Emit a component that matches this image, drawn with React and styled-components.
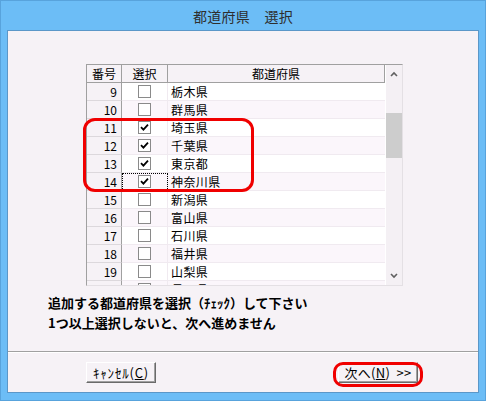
import React from 'react';
import styled, { createGlobalStyle } from 'styled-components';

const GlobalStyle = createGlobalStyle`
  html, body {
    margin: 0;
    padding: 0;
    background: #6cbdf6;
  }
  body {
    font-family: "Noto Sans CJK JP", "Noto Sans", sans-serif;
  }
`;

const Window = styled.div`
  box-sizing: border-box;
  width: 486px;
  height: 401px;
  border: 1px solid #58a3dc;
  background: #6cbdf6;
  display: flex;
  flex-direction: column;
  padding: 0 6px 7px 6px;
`;

const TitleBar = styled.div`
  height: 29px;
  display: flex;
  align-items: center;
  justify-content: center;
  font-size: 14px;
  letter-spacing: 0.3px;
  color: #2e2e2e;
`;

const Client = styled.div`
  flex: 1;
  border: 1px solid #5b97c8;
  background: #f6f2f6;
  display: flex;
  flex-direction: column;
`;

const ListWrap = styled.div`
  position: relative;
  margin: 33px 0 0 78px;
  width: 317px;
  height: 222px;
`;

const ListBox = styled.div`
  box-sizing: border-box;
  width: 100%;
  height: 100%;
  border-top: 1px solid #a0a0a0;
  border-left: 1px solid #a0a0a0;
  border-right: 1px solid #e4e0e4;
  border-bottom: 1px solid #e4e0e4;
  background: #ffffff;
  display: flex;
  overflow: hidden;
`;

const Table = styled.div`
  flex: 1;
  display: flex;
  flex-direction: column;
  overflow: hidden;
`;

const Row = styled.div`
  display: grid;
  grid-template-columns: 35px 46px 1fr;
  height: 18px;
  flex: none;
  background: ${(p) => (p.$alt ? '#fbf6fb' : '#ffffff')};
`;

const HeadCell = styled.div`
  box-sizing: border-box;
  display: flex;
  align-items: center;
  justify-content: center;
  background: #f6f2f6;
  border-right: 1px solid #a0a0a0;
  border-bottom: 1px solid #a0a0a0;
  font-size: 12px;
  color: #000;
`;

const NumCell = styled.div`
  box-sizing: border-box;
  display: flex;
  align-items: center;
  justify-content: flex-end;
  padding-right: 4px;
  background: #f6f2f6;
  border-right: 1px solid #a0a0a0;
  border-bottom: 1px solid #dcd8dc;
  font-size: 12px;
  color: #000;
`;

const SelCell = styled.div`
  box-sizing: border-box;
  display: flex;
  align-items: center;
  justify-content: center;
  border-right: 1px solid #f0eaf0;
  border-bottom: 1px solid #f0eaf0;
  outline: ${(p) => (p.$focus ? '1px dotted #000' : 'none')};
  outline-offset: -1px;
`;

const NameCell = styled.div`
  box-sizing: border-box;
  display: flex;
  align-items: center;
  padding-left: 3px;
  border-bottom: 1px solid #f0eaf0;
  font-size: 12px;
  letter-spacing: 0.4px;
  color: #000;
`;

const Box = styled.span`
  box-sizing: border-box;
  width: 13px;
  height: 13px;
  border: 1px solid #8a8a8a;
  background: #fff;
  display: flex;
  align-items: center;
  justify-content: center;
`;

const ScrollBar = styled.div`
  width: 16px;
  flex: none;
  border-left: 1px solid #ffffff;
  background: #f4f0f4;
  display: flex;
  flex-direction: column;
  align-items: center;
`;

const ScrollBtn = styled.div`
  height: 18px;
  width: 100%;
  display: flex;
  align-items: center;
  justify-content: center;
  flex: none;
`;

const Track = styled.div`
  flex: 1;
  width: 100%;
  padding-top: 30px;
`;

const Thumb = styled.div`
  width: 100%;
  height: 45px;
  background: #cdcdcd;
`;

const RedMark = styled.div`
  position: absolute;
  box-sizing: border-box;
  border: 3px solid #f00000;
  border-radius: ${(p) => p.$r}px;
  pointer-events: none;
`;

const Message = styled.div`
  margin: 7px 0 0 40px;
  font-size: 13px;
  font-weight: bold;
  line-height: 20px;
  color: #000;
`;

const Spacer = styled.div`
  flex: 1;
`;

const Separator = styled.div`
  border-top: 1px solid #a0a0a0;
  border-bottom: 1px solid #ffffff;
`;

const Footer = styled.div`
  height: 39px;
  box-sizing: border-box;
  padding: 9px 60px 0 78px;
  display: flex;
  align-items: flex-start;
  justify-content: space-between;
`;

const Button = styled.button`
  box-sizing: border-box;
  width: ${(p) => p.$w}px;
  height: 21px;
  padding: 0;
  background: #f6f2f6;
  border-top: 1px solid #ffffff;
  border-left: 1px solid #ffffff;
  border-right: 1px solid #6a6a6a;
  border-bottom: 1px solid #6a6a6a;
  box-shadow: inset -1px -1px 0 #a0a0a0;
  font-family: "Noto Sans CJK JP", "Noto Sans", sans-serif;
  font-size: 13px;
  letter-spacing: ${(p) => p.$ls || 0}px;
  color: #000;
  display: flex;
  align-items: center;
  justify-content: center;
  white-space: pre;
`;

const BtnWrap = styled.span`
  position: relative;
  display: inline-flex;
`;

const U = styled.span`
  text-decoration: underline;
`;

const prefs = [
  [9, '栃木県', false],
  [10, '群馬県', false],
  [11, '埼玉県', true],
  [12, '千葉県', true],
  [13, '東京都', true],
  [14, '神奈川県', true],
  [15, '新潟県', false],
  [16, '富山県', false],
  [17, '石川県', false],
  [18, '福井県', false],
  [19, '山梨県', false],
  [20, '長野県', false],
];

const Check = () => (
  <svg width="9" height="9" viewBox="0 0 9 9">
    <path d="M1 4.2 L3.4 6.6 L8 1.6" fill="none" stroke="#000" strokeWidth="1.8" />
  </svg>
);

const Chevron = ({ up }) => (
  <svg width="8" height="6" viewBox="0 0 8 6">
    <path
      d={up ? 'M1 5 L4 2 L7 5' : 'M1 1 L4 4 L7 1'}
      fill="none"
      stroke="#606060"
      strokeWidth="1.6"
    />
  </svg>
);

export default function App() {
  return (
    <>
      <GlobalStyle />
      <Window>
        <TitleBar>都道府県　選択</TitleBar>
        <Client>
          <ListWrap>
            <ListBox>
              <Table>
                <Row>
                  <HeadCell>番号</HeadCell>
                  <HeadCell>選択</HeadCell>
                  <HeadCell>都道府県</HeadCell>
                </Row>
                {prefs.map(([no, name, on], i) => (
                  <Row key={no} $alt={i % 2 === 1}>
                    <NumCell>{no}</NumCell>
                    <SelCell $focus={no === 14}>
                      <Box>{on && <Check />}</Box>
                    </SelCell>
                    <NameCell>{name}</NameCell>
                  </Row>
                ))}
              </Table>
              <ScrollBar>
                <ScrollBtn>
                  <Chevron up />
                </ScrollBtn>
                <Track>
                  <Thumb />
                </Track>
                <ScrollBtn>
                  <Chevron />
                </ScrollBtn>
              </ScrollBar>
            </ListBox>
            <RedMark $r={12} style={{ left: -3, top: 54, width: 171, height: 74 }} />
          </ListWrap>
          <Message>
            追加する都道府県を選択（ﾁｪｯｸ）して下さい
            <br />
            1つ以上選択しないと、次へ進めません
          </Message>
          <Spacer />
          <Separator />
          <Footer>
            <Button $w={70} $ls={0.8}>
              ｷｬﾝｾﾙ(<U>C</U>)
            </Button>
            <BtnWrap>
              <Button $w={80} $ls={0.3}>
                次へ(<U>N</U>)  &gt;&gt;
              </Button>
              <RedMark $r={10} style={{ left: -5, top: 0, width: 90, height: 25 }} />
            </BtnWrap>
          </Footer>
        </Client>
      </Window>
    </>
  );
}
